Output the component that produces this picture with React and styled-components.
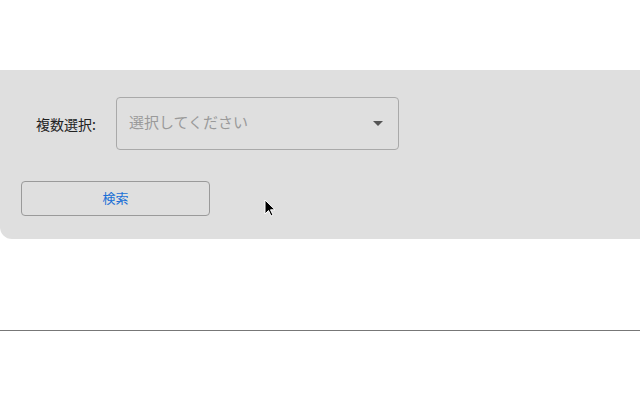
import React from "react";
import styled, { createGlobalStyle } from "styled-components";

const GlobalStyle = createGlobalStyle`
  html, body {
    margin: 0;
    padding: 0;
    background: #ffffff;
    font-family: "Noto Sans CJK JP", "Noto Sans", sans-serif;
  }
`;

const Page = styled.div`
  width: 640px;
  height: 400px;
  padding-top: 70px;
  box-sizing: border-box;
  position: relative;
`;

const Panel = styled.form`
  background: #dfdfdf;
  border-bottom-left-radius: 12px;
  padding: 27px 21px 23px 21px;
  display: flex;
  flex-direction: column;
  gap: 31px;
  align-items: flex-start;
`;

const Row = styled.div`
  display: flex;
  align-items: center;
  padding-left: 15px;
  gap: 20px;
`;

const Label = styled.label`
  font-size: 14px;
  color: #222;
  line-height: 1;
  padding-top: 1px;
`;

const Select = styled.div`
  width: 283px;
  height: 53px;
  box-sizing: border-box;
  border: 1px solid #a9a9a9;
  border-radius: 4px;
  display: flex;
  align-items: center;
  justify-content: space-between;
  padding: 0 15px 4px 12px;
  color: #9a9a9a;
  font-size: 15px;
`;

const Caret = styled.span`
  width: 0;
  height: 0;
  margin-top: 4px;
  border-left: 5px solid transparent;
  border-right: 5px solid transparent;
  border-top: 5px solid #555;
`;

const Button = styled.button`
  width: 189px;
  height: 35px;
  box-sizing: border-box;
  background: transparent;
  border: 1px solid #9a9a9a;
  border-radius: 4px;
  color: #1a6fd6;
  font-family: inherit;
  font-size: 13px;
  padding: 0 0 3px 0;
`;

const Rule = styled.hr`
  margin: 91px 0 0 0;
  border: none;
  border-top: 1px solid #777;
`;

const Cursor = styled.svg`
  position: absolute;
  left: 264px;
  top: 199px;
`;

export default function App() {
  return (
    <Page>
      <GlobalStyle />
      <Panel onSubmit={(e) => e.preventDefault()}>
        <Row>
          <Label>複数選択:</Label>
          <Select>
            <span>選択してください</span>
            <Caret />
          </Select>
        </Row>
        <Button type="button">検索</Button>
      </Panel>
      <Rule />
      <Cursor width="12" height="19" viewBox="0 0 12 19">
        <path
          d="M1 1 L1 15 L4.5 11.5 L7 17 L9 16 L6.5 10.8 L11 10.8 Z"
          fill="#000"
          stroke="#fff"
          strokeWidth="1"
          strokeLinejoin="round"
        />
      </Cursor>
    </Page>
  );
}
